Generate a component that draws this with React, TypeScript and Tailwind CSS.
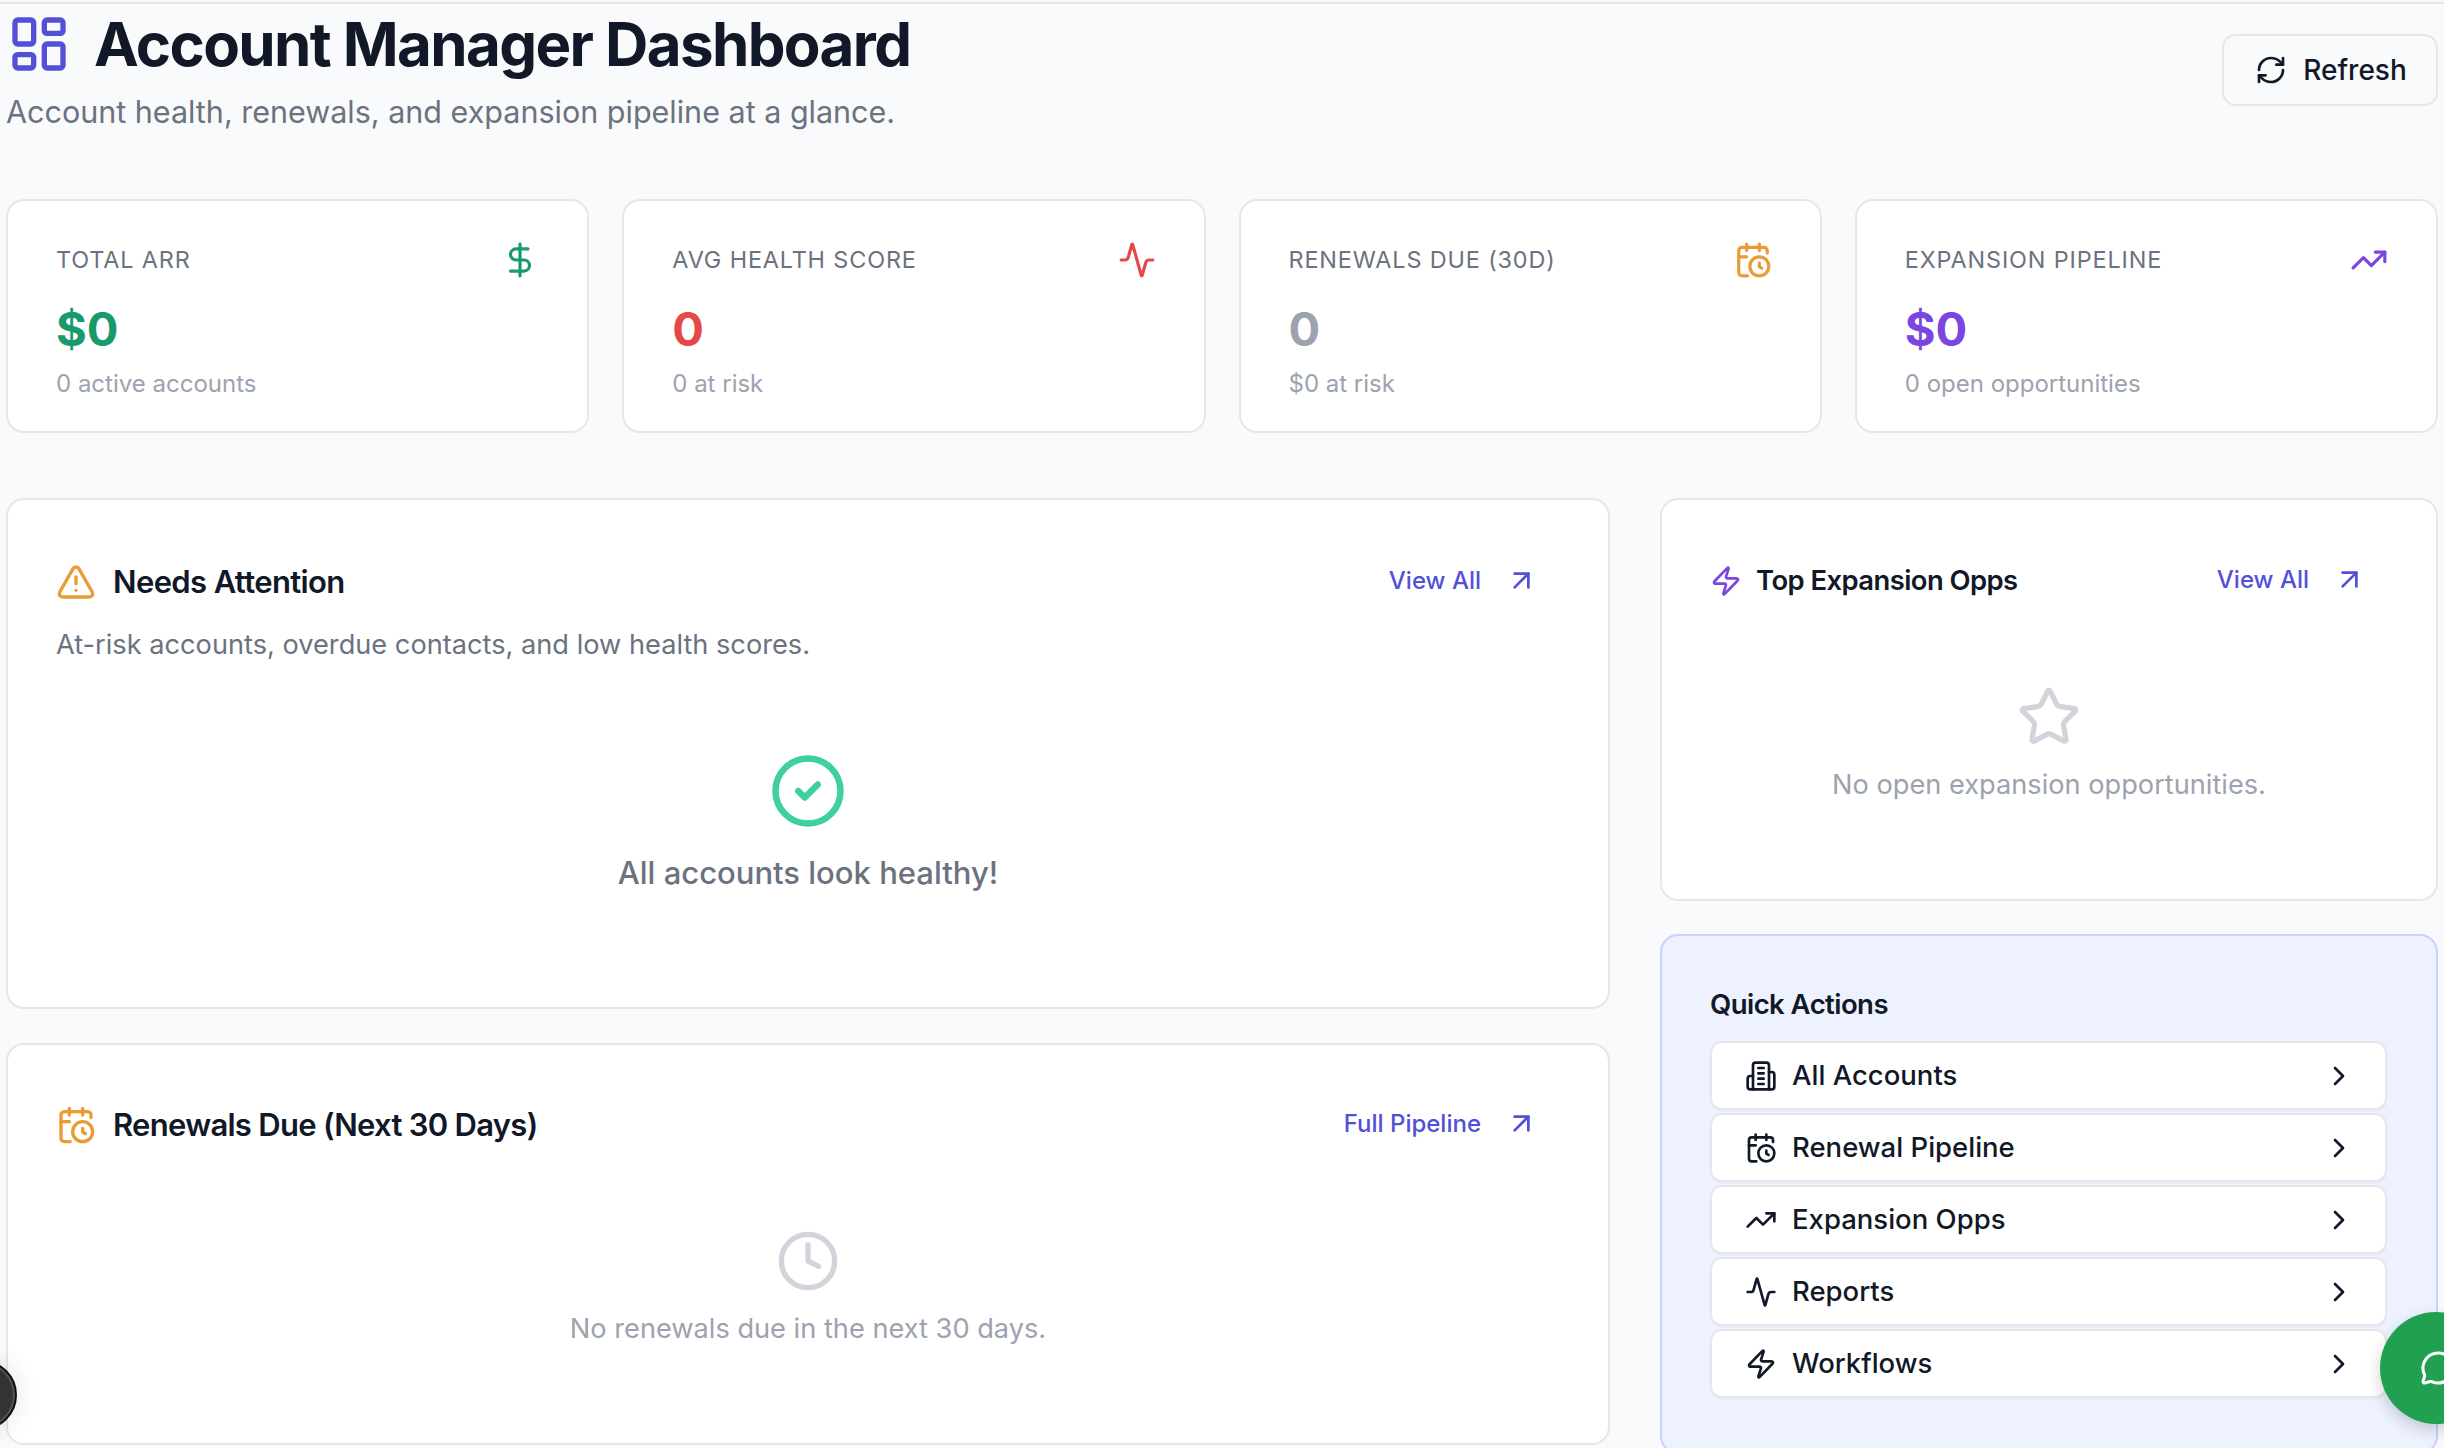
import React from "react";
import {
  LayoutDashboard, RefreshCw, DollarSign, Activity, CalendarClock, TrendingUp,
  TriangleAlert, ArrowUpRight, CircleCheck, Zap, Star, Clock, ChevronRight, MessageCircle,
} from "lucide-react";

function TallBuilding({ size = 32 }: { size?: number }) {
  return (
    <svg width={size} height={size} viewBox="0 0 24 24" fill="none" stroke="currentColor" strokeWidth={2} strokeLinecap="round" strokeLinejoin="round">
      <path d="M6 22V4a2 2 0 0 1 2-2h8a2 2 0 0 1 2 2v18Z" />
      <path d="M6 12H4a2 2 0 0 0-2 2v6a2 2 0 0 0 2 2h2" />
      <path d="M18 9h2a2 2 0 0 1 2 2v9a2 2 0 0 1-2 2h-2" />
      <path d="M10 6h4" />
      <path d="M10 10h4" />
      <path d="M10 14h4" />
      <path d="M10 18h4" />
    </svg>
  );
}

const stats = [
  { label: "TOTAL ARR", value: "$0", sub: "0 active accounts", color: "text-[#189a6c]", Icon: DollarSign },
  { label: "AVG HEALTH SCORE", value: "0", sub: "0 at risk", color: "text-[#e64848]", Icon: Activity },
  { label: "RENEWALS DUE (30D)", value: "0", sub: "$0 at risk", color: "text-[#9ca3af]", Icon: CalendarClock, iconColor: "text-[#e99b34]" },
  { label: "EXPANSION PIPELINE", value: "$0", sub: "0 open opportunities", color: "text-[#7b45e0]", Icon: TrendingUp },
];

const actions = [
  { label: "All Accounts", Icon: TallBuilding },
  { label: "Renewal Pipeline", Icon: CalendarClock },
  { label: "Expansion Opps", Icon: TrendingUp },
  { label: "Reports", Icon: Activity },
  { label: "Workflows", Icon: Zap },
];

function LinkBtn({ label }: { label: string }) {
  return (
    <div className="-mt-[3px] flex items-center gap-[24px] pr-[22px] text-[24px] font-medium text-[#5350d8]">
      <span>{label}</span>
      <ArrowUpRight size={33} strokeWidth={2} />
    </div>
  );
}

export default function App() {
  return (
    <div className="relative h-[1448px] w-[2444px] overflow-hidden bg-[#f9fafb] pt-[2px] text-[#111827] [font-family:Inter,'Liberation_Sans',sans-serif]">
      <div className="h-[1446px] border-t-2 border-[#e5e7eb] pl-[6px] pr-[6px]">
        <header className="flex h-[195px] items-start justify-between">
          <div>
            <div className="ml-[1px] mt-[8px] flex items-center gap-[23px]">
              <LayoutDashboard size={64} strokeWidth={2} className="text-[#5350d8]" />
              <h1 className="text-[60px] font-bold leading-[62px] tracking-[-0.027em]">Account Manager Dashboard</h1>
            </div>
            <p className="mt-[14px] text-[30.5px] leading-[44px] text-[#6b7280]">Account health, renewals, and expansion pipeline at a glance.</p>
          </div>
          <button className="mt-[30px] flex h-[72px] w-[216px] items-center justify-center gap-[16px] rounded-[14px] border-2 border-[#e5e7eb] bg-[#f9fafb] pl-[2px] text-[28px] font-medium text-[#111827]">
            <RefreshCw size={32} strokeWidth={2} />
            Refresh
          </button>
        </header>

        <section className="grid h-[234px] grid-cols-4 gap-[33px]">
          {stats.map(({ label, value, sub, color, iconColor, Icon }) => (
            <div key={label} className="flex flex-col rounded-[18px] border-2 border-[#e5e7eb] bg-white px-[48px] pt-[37px]">
              <div className="flex h-[44px] items-center justify-between">
                <span className="text-[23.4px] font-normal tracking-[0.037em] text-[#6b7280]">{label}</span>
                <Icon size={38} strokeWidth={2} className={iconColor ?? color} />
              </div>
              <div className={`mt-[19px] text-[47px] font-bold leading-[56px] ${color}`}>{value}</div>
              <div className="mt-[9px] text-[24px] leading-[36px] text-[#9ca3af]">{sub}</div>
            </div>
          ))}
        </section>

        <section className="mt-[65px] grid grid-cols-[1604px_778px] gap-x-[50px]">
          <div className="flex flex-col gap-[34px]">
            <div className="flex h-[511px] flex-col rounded-[18px] border-2 border-[#e5e7eb] bg-white px-[48px] pt-[62px]">
              <div className="flex h-[40px] items-center justify-between">
                <div className="flex items-center gap-[17px]">
                  <TriangleAlert size={40} strokeWidth={2} className="text-[#e99b34]" />
                  <h2 className="text-[31px] font-semibold tracking-[-0.02em]">Needs Attention</h2>
                </div>
                <LinkBtn label="View All" />
              </div>
              <p className="mt-[25px] text-[27.2px] leading-[36px] text-[#6b7280]">At-risk accounts, overdue contacts, and low health scores.</p>
              <div className="mt-[89px] flex flex-col items-center">
                <CircleCheck size={78} strokeWidth={2} className="text-[#3fd09b]" />
                <p className="mt-[21px] text-[31px] font-medium leading-[44px] text-[#6b7280]">All accounts look healthy!</p>
              </div>
            </div>

            <div className="flex h-[402px] flex-col rounded-[18px] border-2 border-[#e5e7eb] bg-white px-[48px] pt-[60px]">
              <div className="flex h-[40px] items-center justify-between">
                <div className="flex items-center gap-[17px]">
                  <CalendarClock size={40} strokeWidth={2} className="text-[#e99b34]" />
                  <h2 className="text-[31px] font-semibold tracking-[-0.023em]">Renewals Due (Next 30 Days)</h2>
                </div>
                <LinkBtn label="Full Pipeline" />
              </div>
              <div className="mt-[84px] flex flex-col items-center">
                <Clock size={64} strokeWidth={2} className="text-[#d1d5db]" />
                <p className="mt-[16px] text-[27.2px] leading-[40px] text-[#9ca3af]">No renewals due in the next 30 days.</p>
              </div>
            </div>
          </div>

          <div className="flex flex-col gap-[33px]">
            <div className="flex h-[403px] flex-col rounded-[18px] border-2 border-[#e5e7eb] bg-white px-[48px] pt-[61px]">
              <div className="flex h-[40px] items-center justify-between">
                <div className="flex items-center gap-[14px]">
                  <Zap size={32} strokeWidth={2} className="text-[#7b45e0]" />
                  <h2 className="text-[27.4px] font-semibold tracking-[-0.02em]">Top Expansion Opps</h2>
                </div>
                <LinkBtn label="View All" />
              </div>
              <div className="mt-[84px] flex flex-col items-center">
                <Star size={64} strokeWidth={2} className="text-[#d1d5db]" />
                <p className="mt-[16px] text-[27.2px] leading-[40px] text-[#9ca3af]">No open expansion opportunities.</p>
              </div>
            </div>

            <div className="h-[520px] rounded-[18px] border-2 border-[#c7d2fe] bg-[#eef2ff] pl-[48px] pr-[49px] pt-[50px]">
              <h3 className="text-[27.5px] font-semibold leading-[36px] tracking-[-0.02em]">Quick Actions</h3>
              <div className="mt-[19px] flex flex-col gap-[3px]">
                {actions.map(({ label, Icon }) => (
                  <div key={label} className="flex h-[69px] items-center rounded-[12px] border-2 border-[#e5e7eb] bg-white pl-[33px] pr-[30px] shadow-[0_1px_2px_rgba(0,0,0,0.05)]">
                    <Icon size={32} strokeWidth={2} />
                    <span className="ml-[15px] flex-1 text-[27.5px] font-medium">{label}</span>
                    <ChevronRight size={32} strokeWidth={2} />
                  </div>
                ))}
              </div>
            </div>
          </div>
        </section>
      </div>

      <div className="absolute left-[2380px] top-[1312px] flex h-[112px] w-[112px] items-center rounded-full bg-[#22a052] pl-[40px] text-white shadow-[0_6px_16px_rgba(0,0,0,0.18)]">
        <MessageCircle size={36} strokeWidth={2} />
      </div>
      <div className="absolute -left-[53px] top-[1360px] h-[70px] w-[70px] rounded-full border-[2px] border-[#111] bg-[#333] shadow-[0_0_24px_rgba(0,0,0,0.12),inset_0_0_0_2px_#555]" />
    </div>
  );
}
